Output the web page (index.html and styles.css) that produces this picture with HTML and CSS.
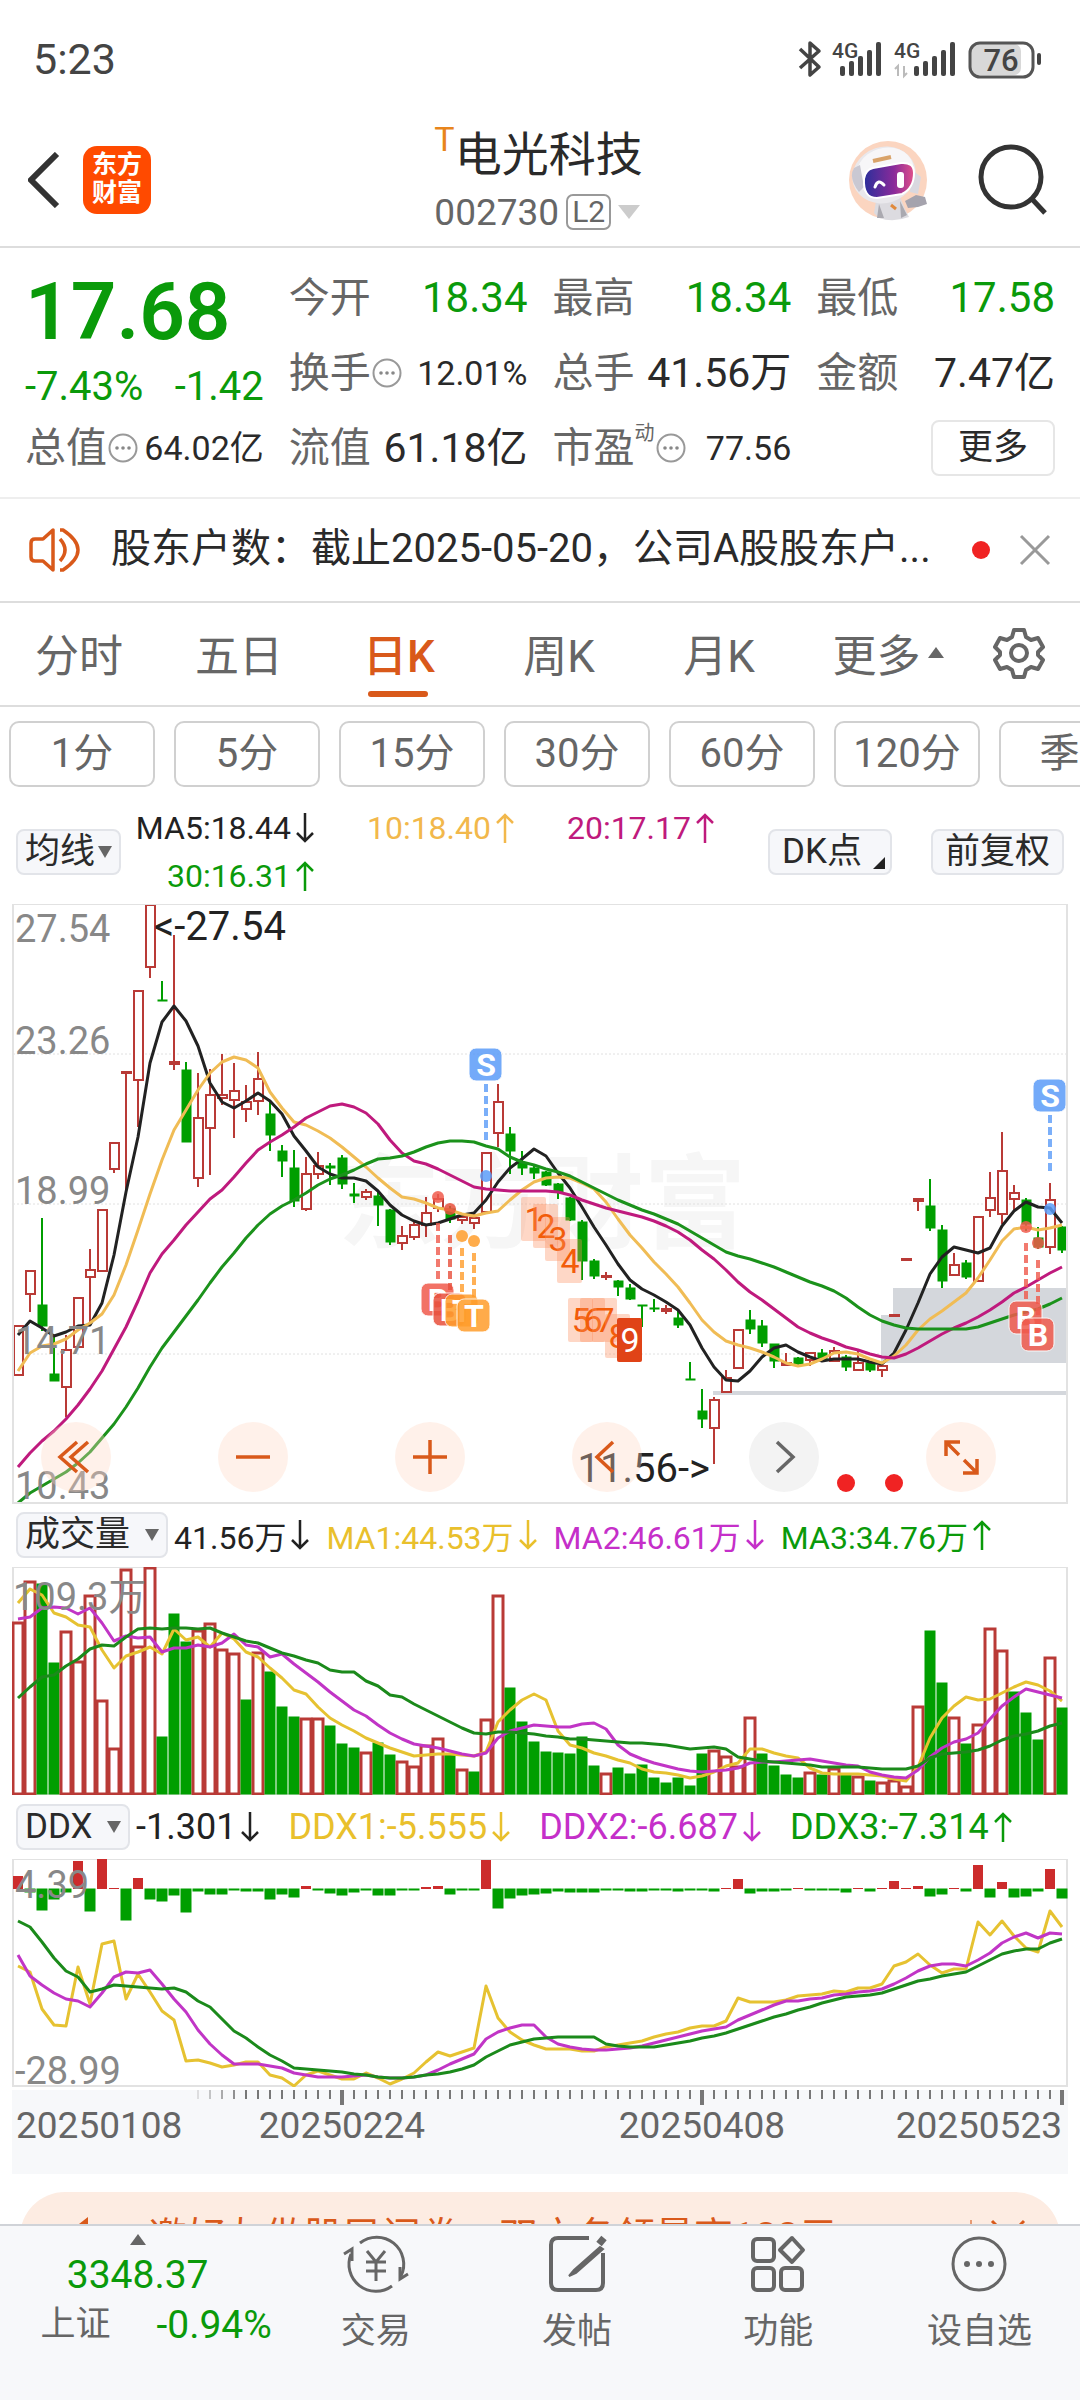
FILE: index.html
```
<!DOCTYPE html>
<html lang="zh-CN">
<head>
    <meta charset="UTF-8">
    <meta name="viewport" content="width=device-width, initial-scale=1.0">
    <title>电光科技 002730</title>
    <link rel="stylesheet" href="styles.css">
</head>
<body>

    <!-- Shared symbols -->
    <svg class="symbols" aria-hidden="true">
        <symbol id="up" viewBox="0 0 20 32"><path d="M10 31V3M2 11l8-8 8 8" fill="none" stroke="currentColor" stroke-width="2.5"/></symbol>
        <symbol id="down" viewBox="0 0 20 32"><path d="M10 1v28M2 21l8 8 8-8" fill="none" stroke="currentColor" stroke-width="2.5"/></symbol>
        <symbol id="info" viewBox="0 0 30 30"><circle cx="15" cy="15" r="13.5" fill="none" stroke="#999" stroke-width="2"/><g fill="#888"><circle cx="9" cy="15" r="1.8"/><circle cx="15" cy="15" r="1.8"/><circle cx="21" cy="15" r="1.8"/></g></symbol>
    </svg>

    <!-- Phone status bar -->
    <div class="status">
        <span class="clock">5:23</span>
        <svg class="status-icons" viewBox="0 0 250 40" role="img" aria-label="蓝牙 4G 76%">
            <path d="M3 10l19 18-9 8V4l9 8L3 29" fill="none" stroke="#444" stroke-width="3.5" stroke-linejoin="round"/>
            <g fill="#444">
                <text x="35" y="19" class="net">4G</text>
                <rect x="43" y="27" width="5" height="10" rx="2"/><rect x="52" y="22" width="5" height="15" rx="2"/><rect x="61" y="17" width="5" height="20" rx="2"/><rect x="70" y="11" width="5" height="26" rx="2"/><rect x="79" y="3" width="5" height="34" rx="2"/>
                <text x="97" y="19" class="net">4G</text>
                <rect x="117" y="27" width="5" height="10" rx="2"/><rect x="126" y="22" width="5" height="15" rx="2"/><rect x="135" y="17" width="5" height="20" rx="2"/><rect x="144" y="11" width="5" height="26" rx="2"/><rect x="153" y="3" width="5" height="34" rx="2"/>
                <rect x="240" y="14" width="4" height="12" rx="2"/>
            </g>
            <path d="M101 37V27l-3 3M107 27v10l3-3" fill="none" stroke="#bbb" stroke-width="2"/>
            <rect x="174" y="5" width="50" height="31" rx="7" fill="#d8d8d8"/>
            <rect x="173" y="4" width="63" height="34" rx="10" fill="none" stroke="#555" stroke-width="3"/>
            <text x="204" y="32" text-anchor="middle" class="battery">76</text>
        </svg>
    </div>

    <!-- Title bar -->
    <header class="title-bar">
        <div class="title-left">
            <button class="plain" aria-label="返回">
                <svg width="32" height="56" viewBox="0 0 32 56"><path d="M29 2L3 28l26 26" fill="none" stroke="#333" stroke-width="6"/></svg>
            </button>
            <a class="brand" href="#">东方<br>财富</a>
        </div>
        <div class="stock">
            <h1><sup>T</sup>电光科技</h1>
            <div class="code">002730<span class="level">L2</span><i class="caret caret-light"></i></div>
        </div>
        <div class="title-right">
            <button class="plain" aria-label="助手">
                <svg width="80" height="82" viewBox="0 0 80 82">
                    <circle cx="39" cy="41" r="39" fill="#fbd5c0"/>
                    <path d="M27 62l24-4 5 12 4 8q-16 6-30 1l-5-5z" fill="#dcdbe0"/>
                    <path d="M30 65l5 14h-7zM51 62l7 14-6 3z" fill="#aaa9b0"/>
                    <path d="M56 62l11-6 9 2 2 7-9 3-10 1z" fill="#a5a3ad"/>
                    <ellipse cx="35" cy="36" rx="32" ry="28" transform="rotate(-18 35 36)" fill="#e9e8ec"/>
                    <ellipse cx="36" cy="33" rx="29" ry="24" transform="rotate(-18 36 33)" fill="#f7f6f8"/>
                    <path d="M5 29q-6 10 5 24l5-5-4-22z" fill="#c9c8d2"/>
                    <path d="M62 30l10 8-3 17-8-2z" fill="#d9d8df"/>
                    <defs><linearGradient id="visor" x1="0" y1="0" x2="1" y2="0"><stop offset="0" stop-color="#2b2f9b"/><stop offset=".6" stop-color="#8a2a9a"/><stop offset="1" stop-color="#e0508a"/></linearGradient></defs>
                    <path d="M15 40q1-9 9-11l28-5q13-1 13 10 0 15-12 21l-25 4q-14 0-13-19z" fill="url(#visor)" stroke="#fff" stroke-width="2"/>
                    <path d="M26 48q3-9 9-2" fill="none" stroke="#fff" stroke-width="3" stroke-linecap="round"/>
                    <rect x="48" y="33" width="7" height="16" rx="3" fill="#fff"/>
                    <path d="M24 22l18-4" stroke="#d9a36a" stroke-width="4"/>
                    <path d="M42 66l5 4" stroke="#e08a3c" stroke-width="3"/>
                </svg>
            </button>
            <button class="plain" aria-label="搜索">
                <svg width="72" height="74" viewBox="0 0 72 74"><circle cx="34" cy="34" r="30" fill="none" stroke="#333" stroke-width="5"/><path d="M55 56l13 14" stroke="#333" stroke-width="5"/></svg>
            </button>
        </div>
    </header>

    <!-- Quote figures -->
    <section class="quote">
        <div class="last green">
            <div class="price">17.68</div>
            <div class="change"><span>-7.43%</span><span>-1.42</span></div>
        </div>
        <div class="cell"><span>今开</span><b class="green">18.34</b></div>
        <div class="cell"><span>最高</span><b class="green">18.34</b></div>
        <div class="cell"><span>最低</span><b class="green">17.58</b></div>
        <div class="cell"><span>换手</span><svg class="info"><use href="#info"/></svg><b class="small">12.01%</b></div>
        <div class="cell"><span>总手</span><b>41.56万</b></div>
        <div class="cell"><span>金额</span><b>7.47亿</b></div>
        <div class="cell"><span>总值</span><svg class="info"><use href="#info"/></svg><b class="small">64.02亿</b></div>
        <div class="cell"><span>流值</span><b>61.18亿</b></div>
        <div class="cell"><span>市盈<sup>动</sup></span><svg class="info"><use href="#info"/></svg><b class="small">77.56</b></div>
        <div class="cell"><button class="more">更多</button></div>
    </section>

    <!-- Announcement -->
    <section class="notice">
        <svg width="52" height="46" viewBox="0 0 52 46" fill="none" stroke="#d9591a" stroke-width="3.5" stroke-linejoin="round"><path d="M24 3v40l-10-9H6q-4 0-4-4V16q0-4 4-4h8z"/><path d="M31 12q10 11 0 22M31 3h3q30 20 0 40h-3"/></svg>
        <a href="#">股东户数：截止2025-05-20，公司A股股东户...</a>
        <i class="dot"></i>
        <button class="plain" aria-label="关闭">
            <svg width="32" height="32" viewBox="0 0 32 32"><path d="M2 2l28 28M30 2L2 30" stroke="#999" stroke-width="3"/></svg>
        </button>
    </section>

    <!-- Chart tabs -->
    <nav class="tabs">
        <button>分时</button>
        <button>五日</button>
        <button class="active">日K</button>
        <button>周K</button>
        <button>月K</button>
        <button>更多<i class="caret caret-up"></i></button>
        <button aria-label="设置">
            <svg width="52" height="52" viewBox="0 0 52 52" fill="none" stroke="#666" stroke-width="4" stroke-linejoin="round"><path d="M21 3h10l2 7 5 3 7-2 5 9-5 5v3l5 5-5 9-7-2-5 3-2 7H21l-2-7-5-3-7 2-5-9 5-5v-3l-5-5 5-9 7 2 5-3z"/><circle cx="26" cy="26" r="8"/></svg>
        </button>
    </nav>

    <nav class="periods">
        <button>1分</button>
        <button>5分</button>
        <button>15分</button>
        <button>30分</button>
        <button>60分</button>
        <button>120分</button>
        <button>季K</button>
    </nav>

    <main class="charts">
        <div class="ma-row">
            <label class="picker tight"><select aria-label="主图指标"><option>均线</option></select></label>
            <div class="ma-values">
                <span class="black">MA5:18.44<svg class="arrow"><use href="#down"/></svg></span>
                <span class="amber">10:18.40<svg class="arrow"><use href="#up"/></svg></span>
                <span class="pink">20:17.17<svg class="arrow"><use href="#up"/></svg></span>
                <span class="green">30:16.31<svg class="arrow"><use href="#up"/></svg></span>
            </div>
            <button class="tag dk">DK点</button>
            <button class="tag">前复权</button>
        </div>

        <div class="pane">
            <svg id="price-chart" viewBox="0 0 1056 600"></svg>
            <div class="tools">
                <button aria-label="最左"><svg viewBox="0 0 70 70"><path d="M36 20L19 35l17 15M47 20L30 35l17 15"/></svg></button>
                <button aria-label="缩小"><svg viewBox="0 0 70 70"><path d="M18 35h34"/></svg></button>
                <button aria-label="放大"><svg viewBox="0 0 70 70"><path d="M18 35h34M35 18v34"/></svg></button>
                <button aria-label="左移"><svg viewBox="0 0 70 70"><path d="M41 20L25 35l16 15"/></svg></button>
                <button class="off" aria-label="右移"><svg viewBox="0 0 70 70"><path d="M28 20l16 15-16 15"/></svg></button>
                <button aria-label="全屏"><svg viewBox="0 0 70 70"><path d="M20 34V20h14M20 20l13 13M37 51h14V37M51 51L38 38"/></svg></button>
            </div>
        </div>

        <div class="legend">
            <label class="picker"><select aria-label="副图一"><option>成交量</option></select></label>
            <span class="black">41.56万<svg class="arrow"><use href="#down"/></svg></span>
            <span class="yellow">MA1:44.53万<svg class="arrow"><use href="#down"/></svg></span>
            <span class="purple">MA2:46.61万<svg class="arrow"><use href="#down"/></svg></span>
            <span class="green">MA3:34.76万<svg class="arrow"><use href="#up"/></svg></span>
        </div>
        <div class="pane"><svg id="volume-chart" viewBox="0 0 1056 228"></svg></div>

        <div class="legend ddx">
            <label class="picker"><select aria-label="副图二"><option>DDX</option></select></label>
            <span class="black">-1.301<svg class="arrow"><use href="#down"/></svg></span>
            <span class="yellow">DDX1:-5.555<svg class="arrow"><use href="#down"/></svg></span>
            <span class="purple">DDX2:-6.687<svg class="arrow"><use href="#down"/></svg></span>
            <span class="green">DDX3:-7.314<svg class="arrow"><use href="#up"/></svg></span>
        </div>
        <div class="pane"><svg id="ddx-chart" viewBox="0 0 1056 228"></svg></div>
        <div class="axis"><svg id="axis" viewBox="0 0 1056 84"></svg></div>
    </main>

    <a class="promo" href="#">
        <svg width="34" height="40" viewBox="0 0 34 40"><path d="M2 14L20 0v40L2 28z" fill="#d9591a"/></svg>
        <span>邀好友做股民问卷，双方各领最高188元</span>
        <i class="bar"></i>
        <svg width="36" height="36" viewBox="0 0 36 36"><path d="M2 2l32 32M34 2L2 34" stroke="#d9591a" stroke-width="3"/></svg>
    </a>

    <!-- Bottom bar -->
    <footer class="bottom">
        <a class="index" href="#">
            <i class="caret caret-up"></i>
            <b class="green">3348.37</b>
            <span>上证<em class="green">-0.94%</em></span>
        </a>
        <a href="#">
            <svg width="66" height="60" viewBox="0 0 66 60" fill="none" stroke="#666" stroke-width="3"><path d="M17 9a27 27 0 0 1 41 33M49 52A27 27 0 0 1 8 20"/><path d="M1 20l8-5v12M65 40l-8 5V33"/><path d="M24 17l9 11 9-11M33 28v19M23 28h20M23 37h20"/></svg>
            交易
        </a>
        <a href="#">
            <svg width="60" height="60" viewBox="0 0 60 60" fill="none" stroke="#666" stroke-width="4"><path d="M42 4H11q-7 0-7 7v38q0 7 7 7h38q7 0 7-7V19"/><path d="M53 13L27 36l-5 6 7-3 27-24z" fill="#666" stroke-width="2"/><path d="M52 10l5-6" stroke-width="7"/></svg>
            发帖
        </a>
        <a href="#">
            <svg width="60" height="60" viewBox="0 0 60 60" fill="none" stroke="#666" stroke-width="4"><rect x="5" y="5" width="21" height="22" rx="4"/><rect x="5" y="34" width="21" height="22" rx="4"/><rect x="33" y="34" width="21" height="22" rx="4"/><path d="M44 4l11 12-11 12-12-12z" stroke-linejoin="round"/></svg>
            功能
        </a>
        <a href="#">
            <svg width="60" height="60" viewBox="0 0 60 60"><circle cx="30" cy="30" r="26" fill="none" stroke="#666" stroke-width="3"/><g fill="#666"><circle cx="18" cy="30" r="3"/><circle cx="30" cy="30" r="3"/><circle cx="42" cy="30" r="3"/></g></svg>
            设自选
        </a>
    </footer>

    <script src="chart.js"></script>
</body>
</html>
```
FILE: styles.css
```
/* General styling */
* {
    box-sizing: border-box;
}

body {
    margin: 0;
    font-family: Roboto, "Noto Sans CJK SC", sans-serif;
    background: #fff;
    color: #2a2a2a;
    overflow-x: hidden;
}

button, select {
    font-family: inherit;
    color: inherit;
}

a {
    color: inherit;
    text-decoration: none;
}

svg {
    display: block;
    flex: none;
}

.symbols {
    position: absolute;
    width: 0;
    height: 0;
}

.plain {
    padding: 0;
    border: none;
    background: none;
}

.green { color: #0a9a0a; }
.black { color: #222; }
.amber { color: #f2b84b; }
.pink { color: #bf1a7d; }
.yellow { color: #e9c02c; }
.purple { color: #c52fc9; }

.caret {
    border: 8px solid transparent;
    border-bottom: none;
    border-top: 11px solid #666;
}

.caret-light {
    border-width: 14px 11px 0;
    border-top-color: #ccc;
}

.caret-up {
    border-top: none;
    border-bottom: 11px solid #666;
}

/* Status bar */
.status {
    display: flex;
    justify-content: space-between;
    align-items: center;
    height: 117px;
    padding: 0 33px;
    color: #444;
}

.clock {
    font-size: 43px;
}

.status-icons {
    width: 250px;
    height: 40px;
    overflow: visible;
}

.net {
    font-size: 21px;
    font-weight: 500;
}

.battery {
    font-size: 31px;
    font-weight: 500;
    fill: #444;
}

/* Title bar */
.title-bar {
    display: grid;
    grid-template-columns: 1fr auto 1fr;
    align-items: center;
    height: 131px;
    padding: 0 31px 3px 28px;
    border-bottom: 2px solid #ddd;
}

.title-left, .title-right {
    display: flex;
    align-items: center;
    gap: 23px;
}

.title-right {
    justify-content: flex-end;
    gap: 48px;
}

.brand {
    width: 68px;
    height: 68px;
    padding-top: 5px;
    border-radius: 14px;
    background: #ff4a00;
    color: #fff;
    font-size: 25px;
    font-weight: 700;
    line-height: 28px;
    text-align: center;
}

.stock {
    padding-top: 4px;
}

.stock h1 {
    display: flex;
    margin: 0;
    font-size: 47px;
    font-weight: 400;
    line-height: 60px;
}

.stock sup {
    color: #e8851c;
    font-size: 34px;
    line-height: 28px;
}

.code {
    display: flex;
    align-items: center;
    gap: 7px;
    height: 54px;
    font-size: 37px;
    color: #666;
}

.level {
    padding: 0 4px;
    border: 2px solid #999;
    border-radius: 7px;
    font-size: 30px;
    line-height: 32px;
}

/* Quote figures */
.quote {
    display: grid;
    grid-template-columns: repeat(4, 1fr);
    grid-auto-rows: 75px;
    column-gap: 25px;
    padding: 12px 25px;
    border-bottom: 2px solid #eee;
}

.last {
    grid-row: span 2;
    padding-top: 4px;
}

.price {
    font-size: 80px;
    font-weight: 600;
    line-height: 96px;
}

.change {
    display: flex;
    justify-content: space-between;
    font-size: 40px;
    line-height: 54px;
}

.cell {
    display: flex;
    align-items: center;
    font-size: 41px;
    line-height: 60px;
    color: #666;
    white-space: nowrap;
}

.cell sup {
    font-size: 20px;
    line-height: 20px;
    vertical-align: 22px;
}

.cell b {
    margin-left: auto;
    color: #2a2a2a;
    font-weight: 400;
}

.cell b.green {
    color: #0a9a0a;
    font-size: 42px;
}

.cell b.small {
    font-size: 34px;
}

.info {
    width: 30px;
    height: 30px;
    margin-left: 1px;
}

.more {
    width: 124px;
    height: 56px;
    margin-left: auto;
    padding: 0;
    border: 2px solid #e6e6e6;
    border-radius: 8px;
    background: #fff;
    color: #2a2a2a;
    font-size: 35px;
    line-height: 48px;
}

/* Announcement */
.notice {
    display: flex;
    align-items: center;
    height: 104px;
    padding: 0 29px;
    border-bottom: 2px solid #ddd;
}

.notice a {
    flex: 1;
    margin-left: 30px;
    font-size: 40px;
    line-height: 50px;
    padding-bottom: 3px;
    white-space: nowrap;
}

.dot {
    width: 18px;
    height: 18px;
    margin-right: 29px;
    border-radius: 50%;
    background: #f02323;
}

/* Tabs */
.tabs {
    display: grid;
    grid-template-columns: repeat(5, 160fr) 178fr 84fr;
    height: 104px;
    padding-right: 18px;
    border-bottom: 2px solid #ddd;
}

.tabs button {
    display: flex;
    justify-content: center;
    align-items: center;
    gap: 7px;
    position: relative;
    padding: 0 2px 3px 0;
    border: none;
    background: none;
    color: #666;
    font-size: 44px;
}

.tabs .active {
    color: #d9591a;
    font-weight: 500;
}

.tabs .active::after {
    content: "";
    position: absolute;
    bottom: 8px;
    left: calc(50% - 32px);
    width: 60px;
    height: 6px;
    border-radius: 3px;
    background: #d9591a;
}

.periods {
    display: flex;
    gap: 19px;
    padding: 14px 0 0 9px;
    overflow: hidden;
}

.periods button {
    flex: 0 0 146px;
    height: 66px;
    padding: 0;
    border: 2px solid #d0d0d0;
    border-radius: 10px;
    background: #fff;
    color: #666;
    font-size: 40px;
    line-height: 56px;
}

/* Charts */
.charts {
    padding: 0 12px;
}

.ma-row {
    display: flex;
    align-items: center;
    height: 117px;
    padding: 13px 4px 0;
}

.ma-values {
    display: grid;
    grid-template-columns: repeat(3, 200px);
    flex: 1;
    justify-content: start;
    line-height: 48px;
    margin-left: -6px;
    font-size: 32px;
}

.ma-values span, .legend span {
    display: flex;
    justify-content: flex-end;
    align-items: center;
    gap: 4px;
    white-space: nowrap;
}

.arrow {
    width: 20px;
    height: 32px;
}

.tag, .picker {
    height: 46px;
    border: 2px solid #e2e4e9;
    border-radius: 8px;
    background: #f6f7fa;
    color: #2a2a2a;
    font-size: 35px;
    line-height: 40px;
}

.tag {
    padding: 0 12px;
}

.dk {
    position: relative;
    margin-right: 39px;
    padding-right: 28px;
}

.dk::after {
    content: "";
    position: absolute;
    right: 5px;
    bottom: 4px;
    border-left: 12px solid transparent;
    border-bottom: 12px solid #222;
}

.picker {
    display: flex;
    align-items: center;
    gap: 14px;
    padding: 0 7px;
}

.picker.tight {
    gap: 2px;
}

.picker select {
    appearance: none;
    padding: 0;
    border: none;
    background: none;
    font-size: 35px;
    line-height: 40px;
}

.picker::after {
    content: "";
    border: 7px solid transparent;
    border-bottom: none;
    border-top: 12px solid #666;
}

.legend {
    display: flex;
    align-items: center;
    gap: 16px;
    height: 63px;
    padding: 0 0 1px 4px;
    font-size: 32px;
}

.legend .picker {
    margin-right: -10px;
}

.legend.ddx {
    gap: 28px;
    height: 64px;
    font-size: 36px;
}

.legend.ddx .picker {
    margin-right: -22px;
}

.pane {
    position: relative;
}

.pane > svg, .axis > svg {
    width: 100%;
    height: auto;
}

.tools {
    position: absolute;
    right: 72px;
    bottom: 12px;
    left: 29px;
    display: flex;
    justify-content: space-between;
}

.tools button {
    width: 70px;
    height: 70px;
    padding: 0;
    border: none;
    border-radius: 50%;
    background: rgba(255, 216, 196, 0.35);
    color: #d9591a;
}

.tools .off {
    background: #f3f3f3;
    color: #666;
}

.tools path {
    fill: none;
    stroke: currentColor;
    stroke-width: 3.5;
}

.axis {
    margin-top: 3px;
    background: #f7f8fa;
}

/* Chart drawing */
.frame { fill: none; stroke: #e2e2e2; stroke-width: 2; }
.grid { stroke: #e0e0e0; stroke-width: 1; stroke-dasharray: 2 2; }
.zone { fill: #d4d7dc; }
.watermark { font-size: 102px; font-weight: 700; fill: #f6f6f6; }
.up { fill: #fff; stroke: #b93a36; stroke-width: 2; }
.volume .up { stroke-width: 3; }
.fall { fill: #009e00; stroke: #009e00; stroke-width: 1; }
.wick { stroke-width: 2; }
.flow-in { fill: #cc2c2c; }
.line { fill: none; stroke-width: 3; stroke-linejoin: round; }
.scale { font-size: 38px; fill: #888; }
.extreme { font-size: 40px; fill: #222; }
.date { font-size: 37px; fill: #666; }
.count { font-size: 34px; text-anchor: middle; }
.mark { font-size: 32px; font-weight: 700; fill: #fff; text-anchor: middle; }

/* Promo strip */
.promo {
    display: flex;
    align-items: center;
    height: 90px;
    margin: 18px 20px 0;
    padding: 0 34px 0 48px;
    border-radius: 45px;
    background: #fdece2;
    color: #d9591a;
    font-size: 39px;
    line-height: 40px;
    white-space: nowrap;
}

.promo span {
    flex: 1;
    margin-left: 46px;
}

.bar {
    width: 2px;
    height: 34px;
    margin-right: 18px;
    background: #e79a73;
}

/* Bottom bar */
.bottom {
    position: fixed;
    right: 0;
    bottom: 0;
    left: 0;
    display: grid;
    grid-template-columns: 275fr repeat(4, 201fr);
    height: 176px;
    border-top: 2px solid #d0d3d8;
    background: #f7f8fa;
    color: #666;
    font-size: 35px;
}

.bottom a {
    display: flex;
    flex-direction: column;
    align-items: center;
    padding-top: 8px;
    line-height: 40px;
}

.bottom a svg {
    margin-bottom: 18px;
}

.index b {
    margin-top: 10px;
    font-size: 39px;
    font-weight: 400;
}

.index span {
    display: flex;
    gap: 46px;
    margin-top: 10px;
    padding-left: 37px;
}

.index em {
    font-size: 39px;
    font-style: normal;
}
```
FILE: chart.js
```
// Geometry is in viewBox units, one trading day every 12 units
const STEP = 12;
const x = i => 6 + i * STEP;
const nums = s => s.trim().split(/\s+/).map(Number);

// r = up day, g = down day: high, body top, body bottom, low
const candles = `
r422,422,471,471 r367,367,390,408 g314,401,422,427 g431,470,477,477 r431,446,483,513 r394,394,443,443
r345,366,373,419 r306,306,367,367 r239,239,265,269 r168,168,169,289 r87,87,176,223 r1,1,63,74
g77,96,97,97 r31,158,160,166 g158,166,238,238 r169,214,274,283 r165,191,224,271 r150,191,194,201
r159,187,196,234 r181,198,205,218 r148,175,197,211 g197,210,231,247 g241,247,257,273 g246,264,297,303
r253,270,305,307 r248,262,270,275 g259,262,264,281 g251,254,280,285 g279,290,292,299 r285,288,293,296
g287,292,301,322 g305,306,338,341 r322,332,339,346 r316,321,333,336 r293,309,321,333 r290,295,304,308
g302,305,315,319 r312,313,316,320 r309,314,319,325 r249,249,308,308 r180,198,229,243 g223,230,247,270
g247,259,264,271 g261,264,269,275 g267,268,281,282 g279,280,288,295 g293,294,316,317 g316,318,357,376
g355,357,372,375 r368,372,373,376 g376,377,383,392 g380,384,395,396 g401,401,402,423 g395,404,405,408
r401,405,407,410 g407,414,421,424 g458,475,476,476 g485,507,515,524 r493,496,524,560 r466,474,488,488
r426,426,464,464 g406,416,425,430 g416,422,439,443 g440,440,457,464 r449,459,461,461 g453,454,460,461
r448,449,456,462 g445,449,455,458 r443,447,457,457 g451,453,463,467 r447,459,466,466 g458,459,466,468
r461,462,466,473 r411,411,412,412 r355,355,356,356 r295,295,297,307 g275,302,324,327 g321,326,377,384
r349,361,371,371 g356,359,373,375 r313,313,377,377 r268,294,306,313 r228,267,310,320 r281,289,295,307
g294,296,320,327 g323,334,343,345 r279,296,343,350 g322,323,346,349`.trim().split(/\s+/);

const priceLines = {
    '#222': '431 417 424 432 428 422 421 399 351 288 233 159 118 102 117 142 179 198 204 197 189 197 210 232 247 263 270 274 274 277 287 301 311 317 321 319 315 311 309 296 278 264 255 245 252 269 284 303 323 341 360 376 385 391 398 406 421 444 463 476 477 467 453 444 441 448 453 457 455 455 455 458 460 449 426 399 370 353 343 346 349 344 322 307 298 303 304 319',
    '#f0bc55': '467 449 442 440 435 426 419 410 391 361 326 290 256 226 206 186 169 158 153 156 164 188 204 218 221 227 234 243 253 263 274 284 293 295 299 304 306 310 312 309 307 296 286 278 274 273 274 279 285 298 315 331 344 358 370 383 399 416 428 437 441 444 448 453 459 462 460 455 449 448 450 455 459 452 441 426 415 407 398 389 374 356 337 325 323 326 324 321',
    '#bf1a7d': '563 549 537 527 515 501 485 467 445 423 397 369 350 336 321 308 295 286 273 259 246 238 231 223 214 208 202 200 203 209 220 236 249 257 260 265 271 277 283 285 286 287 287 287 287 288 291 296 300 304 307 310 313 317 322 328 336 346 355 366 378 388 396 405 414 423 429 434 438 443 446 450 453 454 450 444 437 430 424 419 413 406 398 389 383 376 369 363',
    '#1b921b': '599 589 582 575 568 559 548 534 520 503 484 463 444 428 412 396 379 363 349 334 321 310 302 296 289 281 275 271 266 260 255 254 252 248 243 239 237 237 238 242 245 253 258 261 265 268 272 278 284 290 296 301 306 310 315 320 327 334 341 348 352 355 359 363 368 373 378 382 387 394 403 411 417 421 424 425 425 425 425 425 423 419 415 411 408 405 400 394'
};

const volumes = nums('56 15 17 96 65 95 29 134 182 3 80 1 170 47 75 64 57 83 87 133 86 105 140 150 152 152 159 177 181 186 176 188 195 200 179 172 188 203 205 153 29 121 155 175 185 186 187 170 199 207 201 207 198 211 216 211 219 187 184 190 200 151 187 199 208 211 206 208 202 208 210 214 216 214 220 140 64 116 151 177 158 62 84 125 146 173 91 141');

// Days whose volume bar has the other colour than the candle
const flipped = [13, 19, 38, 54, 61, 64, 83];

const volumeLines = {
    '#e6c231': '36 22 28 46 50 58 60 83 101 89 85 80 87 62 73 70 80 66 72 85 90 101 111 123 127 140 151 158 164 171 176 181 185 189 188 187 187 188 189 185 155 143 133 127 133 164 178 181 186 189 193 196 202 205 206 208 211 209 205 199 196 182 182 186 189 191 201 206 207 207 207 208 209 212 214 200 171 151 139 130 133 132 126 120 115 118 124 134',
    '#c135c6': '52 50 41 40 41 47 41 56 74 69 71 70 85 81 81 78 80 76 67 78 80 90 87 97 106 115 125 134 143 149 158 166 172 177 179 181 184 187 189 186 171 164 161 158 159 160 160 157 156 162 178 187 192 196 199 202 204 205 204 203 201 196 195 195 194 193 192 194 196 198 199 205 208 210 211 203 190 181 175 172 166 152 139 130 122 125 128 131',
    '#1b8a1b': '131 120 110 108 99 92 82 78 79 70 62 61 62 61 61 62 61 66 70 74 76 81 86 89 93 96 103 105 105 114 119 128 130 137 143 149 155 161 166 167 165 165 166 167 169 170 172 172 173 174 175 176 176 177 178 180 182 181 180 182 190 192 194 195 196 197 198 200 200 200 200 201 202 202 202 199 191 187 186 185 183 179 173 169 167 164 159 156'
};

// Bars hang from or stand on the zero line
const ZERO = 30;
const ddx = nums('17 33 51 40 33 2 52 0 29 61 19 40 42 36 53 32 35 35 31 32 32 40 35 38 27 31 34 36 33 31 36 36 31 31 28 27 35 31 31 1 49 39 36 35 34 32 33 33 33 31 31 32 32 31 31 32 31 31 32 29 20 34 32 32 31 29 31 31 31 33 29 32 29 22 29 27 37 35 29 32 6 38 23 38 37 32 10 39');

const ddxLines = {
    '#e6c231': '107 113 150 166 167 108 145 85 82 140 115 133 152 161 202 201 204 208 206 203 203 216 219 227 216 212 216 220 220 214 219 225 220 214 203 193 197 193 189 127 159 173 181 186 190 190 190 192 192 188 186 184 182 178 175 173 169 167 167 162 139 143 143 143 141 137 136 135 132 133 129 129 125 107 103 95 106 114 110 110 63 76 62 77 89 93 52 68',
    '#c135c6': '96 117 126 134 140 142 148 134 118 113 114 111 125 140 153 171 185 196 205 205 205 207 209 214 216 218 218 218 217 216 218 219 219 218 216 211 205 200 195 180 173 169 166 166 178 185 188 190 191 191 190 189 187 184 181 178 175 172 170 168 161 156 151 146 142 142 140 139 136 135 133 132 130 125 119 112 107 105 105 107 101 94 84 78 74 79 74 75',
    '#1b8a1b': '62 68 83 99 112 118 133 130 126 127 128 129 130 129 133 142 148 160 172 179 188 196 202 209 210 211 212 213 215 216 218 219 219 218 216 215 213 210 206 198 192 186 183 180 179 178 178 178 178 185 187 188 188 188 186 184 182 179 177 174 170 166 162 158 155 151 148 144 141 138 137 136 134 130 126 122 120 117 115 113 107 101 95 92 90 90 84 80'
};

function drawLines(lines) {
    return Object.entries(lines).map(([color, ys]) =>
        `<polyline class="line" stroke="${color}" points="${nums(ys).map((y, i) => x(i) + ',' + y).join(' ')}"/>`
    ).join('');
}

function drawCandle(text, i) {
    const up = text[0] === 'r';
    const [high, top, bottom, low] = text.slice(1).split(',').map(Number);
    const cls = up ? 'up' : 'fall';
    return `<path class="${cls} wick" d="M${x(i)} ${high}V${top}M${x(i)} ${bottom}V${low}"/>` +
        `<rect class="${cls}" x="${x(i) - 4}" y="${top}" width="9" height="${Math.max(bottom - top, 1)}"/>`;
}

// Trade marker: badge, dashed leader and dot on the candle
function drawMark(letter, i, top, from, to, dot, color) {
    return `<path d="M${x(i)} ${from}V${to}" stroke="${color}" stroke-width="4" stroke-dasharray="8 4" opacity=".8"/>` +
        `<circle cx="${x(i)}" cy="${dot}" r="6" fill="${color}" opacity=".85"/>` +
        `<rect x="${x(i) - 17}" y="${top}" width="33" height="33" rx="7" fill="${color}" stroke="#fff" opacity=".85"/>` +
        `<text class="mark" x="${x(i)}" y="${top + 28}">${letter}</text>`;
}

function drawCount(n, left, top) {
    const last = n === 9;
    return `<rect x="${left}" y="${top}" width="25" height="44" rx="2" fill="${last ? '#e04317' : '#fb8c5c'}" opacity="${last ? 1 : 0.35}"/>` +
        `<text class="count" x="${left + 13}" y="${top + 34}" fill="${last ? '#fff' : '#f25c0a'}">${n}</text>`;
}

function drawPrice() {
    const blue = '#5b9cf8', red = '#f05a4c', orange = '#ff9d2b';
    let out = '<text class="watermark" x="326" y="336">东方财富</text>';
    out += '<path class="grid" d="M1 150H1055M1 300H1055M1 450H1055"/>';
    out += '<path class="zone" d="M869 411h12v-27h174v75H869zM701 487h354v4H701z"/>';
    out += candles.map(drawCandle).join('') + drawLines(priceLines);
    [[1, 509, 293], [2, 521, 300], [3, 533, 313], [4, 545, 335], [5, 556, 394], [6, 568, 394], [7, 580, 394], [8, 593, 410], [9, 605, 414]]
        .forEach(c => { out += drawCount(...c); });
    out += drawMark('S', 39, 144, 180, 236, 272, blue) + drawMark('S', 86, 175, 211, 267, 305, blue);
    out += drawMark('B', 35, 379, 319, 376, 293, red) + drawMark('B', 36, 389, 331, 386, 305, '#e8503c');
    out += drawMark('T', 37, 390, 344, 388, 332, orange) + drawMark('T', 38, 395, 349, 393, 337, orange);
    out += drawMark('B', 84, 397, 339, 395, 323, red) + drawMark('B', 85, 414, 356, 411, 339, red);
    out += '<text class="extreme" x="142" y="36">&lt;-27.54</text>';
    out += '<text class="extreme" x="698" y="578" text-anchor="end">11.56-&gt;</text>';
    ['27.54', '23.26', '18.99', '14.71', '10.43'].forEach((t, i) => {
        out += `<text class="scale" x="3" y="${[38, 150, 300, 450, 595][i]}">${t}</text>`;
    });
    out += '<circle cx="834" cy="579" r="9" fill="#f02323"/><circle cx="882" cy="579" r="9" fill="#f02323"/>';
    out += '<rect class="frame" x="1" y="0" width="1054" height="599"/>';
    return out;
}

function drawVolume() {
    const bars = volumes.map((top, i) => {
        const up = (candles[i][0] === 'r') !== flipped.includes(i);
        return `<rect class="${up ? 'up' : 'fall'}" x="${x(i) - 5}" y="${top}" width="10" height="${227 - top}"/>`;
    }).join('');
    return '<rect class="frame" x="1" y="0" width="1054" height="227"/><g class="volume">' + bars + '</g>' +
        drawLines(volumeLines) + '<text class="scale" x="1" y="43">109.3万</text>';
}

function drawDdx() {
    const bars = ddx.map((y, i) =>
        `<rect class="${y < ZERO ? 'flow-in' : 'fall'}" x="${x(i) - 5}" y="${Math.min(y, ZERO)}" width="10" height="${Math.abs(y - ZERO)}"/>`
    ).join('');
    return '<rect class="frame" x="1" y="0" width="1054" height="227"/>' + bars + drawLines(ddxLines) +
        '<text class="scale" x="3" y="39">4.39</text><text class="scale" x="3" y="225">-28.99</text>';
}

function drawAxis() {
    let out = '';
    for (let i = 15; i < 88; i++) {
        const major = i % 30 === 27;
        const fade = Math.min(1, (i - 14) / 5);
        out += `<path d="M${x(i)} 0v${major ? 15 : 9}" stroke="#777" stroke-width="${major ? 4 : 2}" opacity="${fade}"/>`;
    }
    return out + '<text class="date" x="4" y="48">20250108</text>' +
        '<text class="date" x="330" y="48" text-anchor="middle">20250224</text>' +
        '<text class="date" x="690" y="48" text-anchor="middle">20250408</text>' +
        '<text class="date" x="1050" y="48" text-anchor="end">20250523</text>';
}

document.getElementById('price-chart').innerHTML = drawPrice();
document.getElementById('volume-chart').innerHTML = drawVolume();
document.getElementById('ddx-chart').innerHTML = drawDdx();
document.getElementById('axis').innerHTML = drawAxis();
```
